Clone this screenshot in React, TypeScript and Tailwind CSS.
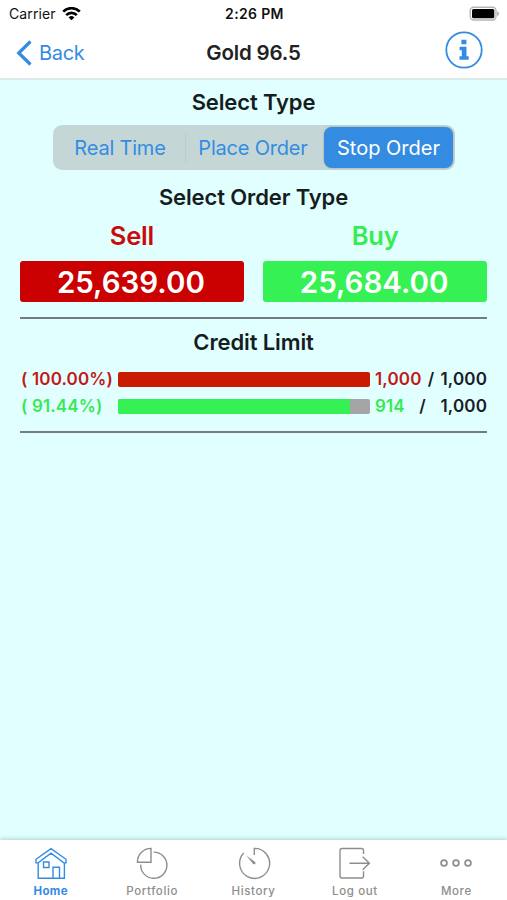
import type { ReactNode } from "react";

function StatusBar() {
  return (
    <div className="grid h-7 grid-cols-[1fr_auto_1fr] items-center pl-[9px] pr-[7px] text-[#111]">
      <div className="flex items-center gap-[6px]">
        <span className="text-[14px] leading-7 tracking-[0.1px]">Carrier</span>
        <svg width="19" height="14" viewBox="0 0 19 14" fill="none" stroke="#000" strokeWidth="2.7">
          <path d="M1.2 4.6a11.8 11.8 0 0 1 16.6 0" />
          <path d="M4.2 8.1a7.5 7.5 0 0 1 10.6 0" />
          <path d="M9.5 13.2 6.6 10.4a4.1 4.1 0 0 1 5.8 0z" fill="#000" stroke="none" />
        </svg>
      </div>
      <span className="text-center text-[14px] font-semibold leading-7 tracking-[0.35px]">2:26 PM</span>
      <svg className="-mt-px justify-self-end" width="31" height="16" viewBox="0 0 31 16">
        <rect x="1.2" y="1.2" width="25.8" height="12.8" rx="3.5" fill="#fff" stroke="#b5b5b5" strokeWidth="1.4" />
        <rect x="3" y="3" width="22.3" height="9.3" rx="1.5" fill="#000" />
        <path d="M28.2 5.2c2.4 1 2.4 3.8 0 4.8z" fill="#aaa" />
      </svg>
    </div>
  );
}

function NavBar() {
  return (
    <div className="grid h-[50px] grid-cols-[1fr_auto_1fr] items-center px-[16px]">
      <div className="flex items-center gap-[7px] text-[#348ce2]">
        <svg className="-mt-px" width="16" height="26" viewBox="0 0 16 26" fill="none" stroke="currentColor" strokeWidth="3.2">
          <path d="M14.5 1.5 2.7 13l11.8 11.5" />
        </svg>
        <span className="text-[20px] leading-6 tracking-[-0.3px]">Back</span>
      </div>
      <span className="text-[20.5px] font-semibold leading-6 tracking-[-0.15px] text-[#222]">Gold 96.5</span>
      <svg className="-mt-[7px] mr-[8px] justify-self-end" width="38" height="38" viewBox="0 0 38 38">
        <circle cx="19" cy="19" r="17.7" fill="#fff" stroke="#348ce2" strokeWidth="1.8" />
        <path d="M16.4 8.8h5v4.4h-5zM14.6 15.8h6.9v9.4h2.2v3.5h-9.2v-3.5h2.3v-6h-2.2z" fill="#348ce2" />
      </svg>
    </div>
  );
}

function Heading({ children }: { children: ReactNode }) {
  return <h2 className="text-center text-[22px] font-semibold leading-[30px] tracking-[-0.12px] text-[#151d1e]">{children}</h2>;
}

function Segments() {
  return (
    <div className="ml-[33px] mr-[32px] mt-[8px] flex h-[45px] items-center rounded-[9px] bg-[#c4d7d6] p-[2px] text-[20px] tracking-[-0.2px] text-[#348ce2]">
      <span className="w-[130px] text-center">Real Time</span>
      <span className="h-7 w-px bg-[#b9cccb]" />
      <span className="w-[135px] pr-px text-center">Place Order</span>
      <span className="ml-[3px] flex h-[41px] flex-1 items-center justify-center rounded-[8px] bg-[#348ce2] tracking-[0px] text-white shadow-[0_0_2px_rgba(0,0,0,0.3)]">Stop Order</span>
    </div>
  );
}

function Quotes() {
  return (
    <div className="mt-[9px] grid grid-cols-2 gap-[19.5px] text-center font-semibold">
      <div>
        <div className="text-[25.5px] leading-[30px] tracking-[-0.2px] text-[#c90b0b]">Sell</div>
        <div className="mt-[10px] h-[41px] rounded-[3px] bg-[#cb0000] pr-[2px] text-[29.5px] leading-[42px] text-white">25,639.00</div>
      </div>
      <div>
        <div className="text-[25.5px] leading-[30px] tracking-[-0.2px] text-[#36ed51]">Buy</div>
        <div className="mt-[10px] h-[41px] rounded-[3px] bg-[#36f153] pr-[2px] text-[29.5px] leading-[42px] text-white">25,684.00</div>
      </div>
    </div>
  );
}

function Credit() {
  return (
    <div className="mt-[9px] text-[17px] font-semibold leading-[27px] tracking-[0.15px] text-[#172022]">
      <div className="flex h-[27px] items-center">
        <span className="w-[98px] whitespace-nowrap pl-px text-[#c31818]">( 100.00%)</span>
        <div className="h-[15px] w-[252px] rounded-[2px] bg-[#ca1b00]" />
        <span className="flex flex-1 justify-between whitespace-nowrap pl-[5px]">
          <span className="text-[#c31818]">1,000</span><span>/</span><span>1,000</span>
        </span>
      </div>
      <div className="flex h-[27px] items-center">
        <span className="w-[98px] whitespace-nowrap pl-px text-[#36e954]">( 91.44%)</span>
        <div className="h-[15px] w-[252px] overflow-hidden rounded-[2px] bg-[#a5a5a5]">
          <div className="h-full w-[91.9%] bg-[#36f153]" />
        </div>
        <span className="flex flex-1 justify-between whitespace-nowrap pl-[5px]">
          <span className="text-[#36e954]">914</span><span>/</span><span>1,000</span>
        </span>
      </div>
    </div>
  );
}

function Tab({ label, active = false, children }: { label: string; active?: boolean; children: ReactNode }) {
  return (
    <div className={active ? "flex flex-1 flex-col items-center text-[#348ce2]" : "flex flex-1 flex-col items-center text-[#8d8d8d]"}>
      <svg width="34" height="34" viewBox="0 0 34 34" fill="none" stroke="currentColor" strokeWidth="1.4">{children}</svg>
      <span className={active ? "mt-[3px] text-[11.5px] font-bold leading-4 tracking-[0.4px]" : "mt-[3px] text-[11.5px] font-medium leading-4 tracking-[0.6px]"}>{label}</span>
    </div>
  );
}

export default function App() {
  return (
    <div className="flex h-[900px] w-[507px] flex-col bg-[#e1ffff] font-['Inter','Liberation_Sans',sans-serif]">
      <header className="h-[80px] border-b-2 border-[#dceaea] bg-white">
        <StatusBar />
        <NavBar />
      </header>
      <main className="flex-1 px-5 pt-[7px]">
        <Heading>Select Type</Heading>
        <Segments />
        <div className="mt-[12px]"><Heading>Select Order Type</Heading></div>
        <Quotes />
        <hr className="mt-[15px] h-[2px] border-0 bg-[#737d7d]" />
        <div className="mt-[8px]"><Heading>Credit Limit</Heading></div>
        <Credit />
        <hr className="mt-[11px] h-[2px] border-0 bg-[#737d7d]" />
      </main>
      <nav className="flex h-[60px] bg-white pt-[6px] shadow-[0_-1px_4px_rgba(0,80,80,0.25)]">
        <Tab label="Home" active>
          <path d="M2 13.3 17 2.6l15 10.7v3.6h-2.2L17 7.2 4.2 16.9H2zM4.2 16.9v15.3h26.2V16.9M9.5 16H15v5.5H9.5zM19 32.2v-11h6.5v11" />
        </Tab>
        <Tab label="Portfolio">
          <path d="M16 2.4v13.9H2.4A13.6 13.6 0 0 1 16 2.4zM18.7 6.1a13.1 13.1 0 1 1-13 12.5" />
        </Tab>
        <Tab label="History">
          <path d="M17.3 9V2.4A15 15 0 1 1 6.7 7.1" />
          <path d="m9.2 9.5 8.9 6.5c1.2 1.5-.5 3-1.9 1.9z" fill="currentColor" stroke="none" />
        </Tab>
        <Tab label="Log out">
          <path d="M25.5 8V4.5a2 2 0 0 0-2-2H4a2 2 0 0 0-2 2V30a2 2 0 0 0 2 2h19.5a2 2 0 0 0 2-2v-4.7M11.5 17.2h19M24.7 10.7l6.7 6.5-6.7 6.5" />
        </Tab>
        <Tab label="More">
          <circle cx="5" cy="17" r="2.9" strokeWidth="1.7" />
          <circle cx="17" cy="17" r="2.9" strokeWidth="1.7" />
          <circle cx="29" cy="17" r="2.9" strokeWidth="1.7" />
        </Tab>
      </nav>
    </div>
  );
}
